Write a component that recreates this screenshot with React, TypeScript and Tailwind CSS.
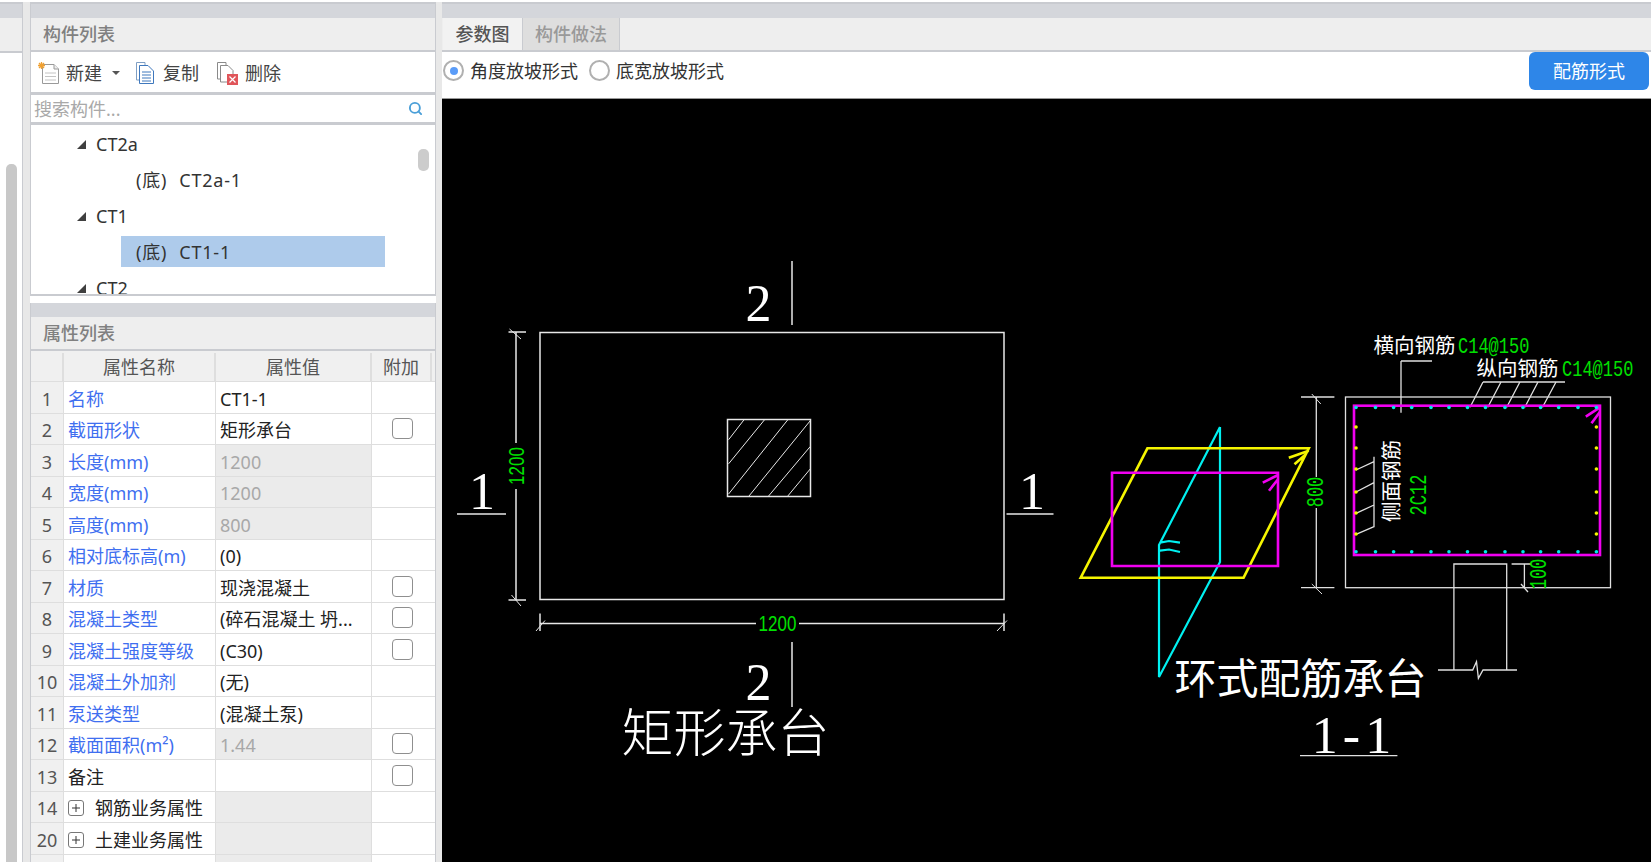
import { Search } from "lucide-react";

const rows = [
  { no: "1", name: "名称", value: "CT1-1" },
  { no: "2", name: "截面形状", value: "矩形承台", check: true },
  { no: "3", name: "长度(mm)", value: "1200", off: true },
  { no: "4", name: "宽度(mm)", value: "1200", off: true },
  { no: "5", name: "高度(mm)", value: "800", off: true },
  { no: "6", name: "相对底标高(m)", value: "(0)" },
  { no: "7", name: "材质", value: "现浇混凝土", check: true },
  { no: "8", name: "混凝土类型", value: "(碎石混凝土 坍...", check: true },
  { no: "9", name: "混凝土强度等级", value: "(C30)", check: true },
  { no: "10", name: "混凝土外加剂", value: "(无)" },
  { no: "11", name: "泵送类型", value: "(混凝土泵)" },
  { no: "12", name: "截面面积(m²)", value: "1.44", off: true, check: true },
  { no: "13", name: "备注", value: "", check: true, black: true },
  { no: "14", name: "钢筋业务属性", value: "", off: true, group: true },
  { no: "20", name: "土建业务属性", value: "", off: true, group: true },
  { no: "", name: "", value: "", off: true, group: true },
];

function Corner() {
  return (
    <svg width="9" height="9" viewBox="0 0 9 9" className="shrink-0">
      <path d="M0 9 L9 0 V9 Z" fill="#3f3f3f" />
    </svg>
  );
}

function NewIcon() {
  return (
    <svg width="24" height="24" viewBox="0 0 24 24" className="shrink-0">
      <path d="M5.5 3.5 H17 L21.5 8 V22.5 H5.5 Z" fill="#fff" stroke="#9a9a9a" />
      <path d="M17 3.5 V8 H21.5" fill="#eee" stroke="#9a9a9a" />
      <path d="M8 12 H19 M8 15.5 H19 M8 19 H19" stroke="#c4c4c4" />
      <path d="M4.5 1 V8 M1 4.5 H8 M2 2 L7 7 M7 2 L2 7" stroke="#f0a030" strokeWidth="1.3" />
    </svg>
  );
}

function CopyIcon() {
  return (
    <svg width="20" height="24" viewBox="0 0 20 24" className="shrink-0">
      <path d="M1.5 1.5 H10 V19 H1.5 Z" fill="#fff" stroke="#7f9fc4" />
      <path d="M4.5 4.5 H13 L18.5 10 V22.5 H4.5 Z" fill="#fff" stroke="#3f78bd" />
      <path d="M7 11 H16 M7 14 H16 M7 17 H16 M7 20 H16" stroke="#3f78bd" />
    </svg>
  );
}

function DeleteIcon() {
  return (
    <svg width="23" height="24" viewBox="0 0 23 24" className="shrink-0">
      <path d="M1.5 1.5 H10 V18 H1.5 Z" fill="#fff" stroke="#8a8a8a" />
      <path d="M4.5 4.5 H12 L17 9.5 V21 H4.5 Z" fill="#fff" stroke="#8a8a8a" />
      <rect x="11" y="13" width="11" height="11" fill="#e0555a" />
      <path d="M13.5 15.5 L19.5 21.5 M19.5 15.5 L13.5 21.5" stroke="#fff" strokeWidth="1.2" />
    </svg>
  );
}

function PlusBox() {
  return (
    <svg width="16" height="16" viewBox="0 0 16 16" className="shrink-0">
      <rect x="0.5" y="0.5" width="15" height="15" rx="2.5" fill="#fff" stroke="#777" />
      <path d="M4 8 H12 M8 4 V12" stroke="#333" />
    </svg>
  );
}

function PropRow({ row }: { row: (typeof rows)[number] }) {
  return (
    <div className="grid h-[31.5px] shrink-0 grid-cols-[33px_152px_156px_60px] border-b border-[#dedede]">
      <div className="flex items-center justify-center border-r border-[#dedede] bg-[#f0f0f0] pt-[3px] text-[#555]">{row.no}</div>
      <div className="flex items-center border-r border-[#dedede] pt-[3px] pl-[4px]">
        {row.group ? (
          <div className="flex items-center gap-[11px] text-[#222]">
            <PlusBox />
            <span>{row.name}</span>
          </div>
        ) : (
          <span className={row.black ? "text-[#222]" : "text-[#3f6ff0]"}>{row.name}</span>
        )}
      </div>
      <div className={`flex items-center border-r border-[#dedede] pt-[3px] pl-[4px] ${row.off ? "bg-[#ebebeb] text-[#a8a8a8]" : "text-[#222]"}`}>
        {row.value}
      </div>
      <div className="flex items-center justify-center">
        {row.check && <div className="h-[21px] w-[21px] rounded-[4px] border border-[#8f8f8f] bg-white" />}
      </div>
    </div>
  );
}

function PanelHeader({ title }: { title: string }) {
  return (
    <>
      <div className="h-[14px] shrink-0 bg-[#d4d6db]" />
      <div className="flex h-[34px] shrink-0 items-center border-b-2 border-[#c9cbd0] bg-[#eeeeee] pl-[12px] font-medium text-[#808080]">
        {title}
      </div>
    </>
  );
}

function Drawing() {
  const topDots = [1356, 1375.5, 1393.6, 1411.7, 1431, 1449, 1467.5, 1485.5, 1505, 1523, 1540.6, 1558.7, 1578, 1596.4];
  const sideDots = [427, 448, 469, 492, 513, 534];
  const serif = "font-['Liberation_Serif',serif] text-[52px] fill-white";
  const cjk = "font-['Noto_Sans_CJK_SC',sans-serif] fill-white";
  const mono = "font-['Liberation_Mono',monospace] text-[17px] fill-[#00e000]";
  const sans = "fill-[#00e000] font-['Liberation_Sans',sans-serif] text-[17px]";

  return (
    <svg viewBox="442 99 1209 763" className="block h-full w-full">
      {/* plan view */}
      <g stroke="#e8e8e8" strokeWidth="1.5" fill="none">
        <rect x="540" y="332.5" width="464" height="267" />
        <rect x="727.5" y="419.5" width="83" height="77" />
        <path d="M792 261V325 M792 642V707 M457 514H506 M1006.5 514H1053.5" />
        <path d="M516 332V443 M516 489V600 M508.5 332H526 M508.5 600H526" />
        <path d="M509.5 329L521 339 M511.5 595L521 606" strokeWidth="1" />
        <path d="M540 623.5H756 M799 623.5H1004 M540 613.5V631 M1004 613.5V631" />
        <path d="M536 631L545 620.5 M997 631L1007 620.5" strokeWidth="1" />
        <path
          d="M728.6 439.7L744 419.8 M728.6 463.8L764.5 419.8 M728.6 494L787.8 419.8 M749 496L810.2 420.8 M768.6 496L810.2 446.6 M787.8 496L810.2 469"
          strokeWidth="1"
        />
      </g>
      <text x="758.5" y="321" textAnchor="middle" className={serif}>2</text>
      <text x="758.5" y="700" textAnchor="middle" className={serif}>2</text>
      <text x="482" y="508.5" textAnchor="middle" className={serif}>1</text>
      <text x="1032" y="508.5" textAnchor="middle" className={serif}>1</text>
      <text transform="translate(777.5 631) scale(1 1.3)" textAnchor="middle" className={sans}>1200</text>
      <text transform="translate(523.5 466) rotate(-90) scale(1 1.35)" textAnchor="middle" className={sans}>1200</text>
      <text x="725.5" y="752" textAnchor="middle" className={`${cjk} font-light text-[52px]`}>矩形承台</text>

      {/* 3d sketch */}
      <g fill="none" strokeWidth="2.2">
        <path
          d="M1220 427V562 L1159 677 V545 L1220 427 M1160 542.7L1169 541L1180 542.7 M1160 550.7L1169 549.5L1180 552"
          stroke="#00f0f0"
        />
        <path
          d="M1147.4 448.3H1308.8L1243.6 577.7H1080.7Z M1308.8 450.7L1288.8 457.7 M1305 455L1294.5 464.3"
          stroke="#f5f500"
          strokeWidth="2.6"
        />
        <path d="M1112 472.7H1278V566H1112Z M1278 475L1262.8 482.7 M1278 479.3L1269 490.7" stroke="#f000f0" strokeWidth="2.6" />
      </g>

      {/* section 1-1 */}
      <g stroke="#e0e0e0" strokeWidth="1.3" fill="none">
        <rect x="1345.5" y="397" width="265" height="190.7" />
        <path d="M1316.3 397V477 M1316.3 508V587.7 M1301 397H1334.4 M1301 587.7H1334.4" />
        <path d="M1311.8 394L1320.8 404 M1311.8 584L1322 594" strokeWidth="1" />
        <path d="M1401 361H1432 M1401 361V412.7 M1483 382H1565" />
        <path d="M1483 382L1470 407.3 M1501 382L1487.8 407.3 M1519.9 382L1506.7 407.3 M1538 382L1524.8 407.3 M1556 382L1542.5 407.3" />
        <path d="M1374 456.7V527.3 M1374 461.7L1356 470 M1374 482.7L1356 492 M1374 505L1356 513.3 M1374 526.7L1356 534.3" />
        <path d="M1453.9 670V564H1506.7V670 M1438 670H1472.7L1476.5 661.7L1478.4 678.3L1483 670H1517" />
        <path d="M1524.4 564V587.7 M1511.6 564H1531 M1521 584L1528 592" />
        <path d="M1300 755.7H1397.4" />
      </g>
      <rect x="1354" y="405.7" width="246" height="149.3" fill="none" stroke="#f000f0" strokeWidth="2.6" />
      <path d="M1600 407.3L1585.8 416.7 M1600 411.7L1591.5 423.3" stroke="#f000f0" strokeWidth="2.6" />
      {topDots.map((x) => (
        <g key={x} fill="#00e8e8">
          <circle cx={x} cy="407.5" r="1.8" />
          <circle cx={x} cy="551.7" r="1.8" />
        </g>
      ))}
      {sideDots.map((y) => (
        <g key={y} fill="#f5f500">
          <circle cx="1356" cy={y} r="1.8" />
          <circle cx="1596.4" cy={y} r="1.8" />
        </g>
      ))}
      <text x="1373.5" y="353" className={`${cjk} text-[20.5px]`}>横向钢筋</text>
      <text x="1476.5" y="375.5" className={`${cjk} text-[20.5px]`}>纵向钢筋</text>
      <text transform="translate(1399 481) rotate(-90)" textAnchor="middle" className={`${cjk} text-[20.5px]`}>侧面钢筋</text>
      <text transform="translate(1458 353) scale(1 1.35)" className={mono}>C14@150</text>
      <text transform="translate(1562 376) scale(1 1.35)" className={mono}>C14@150</text>
      <text transform="translate(1323 492) rotate(-90) scale(1 1.4)" textAnchor="middle" className={mono}>800</text>
      <text transform="translate(1426 495) rotate(-90) scale(1 1.4)" textAnchor="middle" className={mono}>2C12</text>
      <text transform="translate(1546 574) rotate(-90) scale(1 1.4)" textAnchor="middle" className={mono}>100</text>
      <text x="1300.5" y="694" textAnchor="middle" className={`${cjk} text-[42px]`}>环式配筋承台</text>
      <text x="1354" y="752.7" textAnchor="middle" className={`${serif} tracking-[5px]`}>1-1</text>
    </svg>
  );
}

export default function App() {
  return (
    <div className="flex h-[862px] w-[1651px] overflow-hidden bg-white pt-[2px] font-['Noto_Sans','Noto_Sans_CJK_SC',sans-serif] text-[18px] leading-none">
      {/* far left stub */}
      <div className="flex w-[23px] shrink-0 flex-col border-t-2 border-r border-[#c9cbd0]">
        <div className="h-[14px] shrink-0 bg-[#d4d6db]" />
        <div className="h-[35px] shrink-0 border-b-2 border-[#c9cbd0] bg-[#eeeeee]" />
        <div className="flex-1 pt-[111px] pl-[6px]">
          <div className="h-[800px] w-[11px] rounded-t-[5px] bg-[#c8c8c8]" />
        </div>
      </div>
      <div className="w-[7px] shrink-0 bg-[#e8e8e8]" />

      {/* left panels */}
      <div className="flex w-[406px] shrink-0 flex-col border-t-2 border-[#c9cbd0]">
        <div className="flex h-[292px] shrink-0 flex-col border-x border-b-2 border-[#c9cbd0]">
          <PanelHeader title="构件列表" />
          <div className="flex h-[40px] shrink-0 items-center pt-[2px] pl-[6px] text-[#444]">
            <NewIcon />
            <span className="ml-[5px]">新建</span>
            <span className="ml-[10px] h-0 w-0 border-x-[4px] border-t-[4px] border-x-transparent border-t-[#555]" />
            <span className="ml-[15px]"><CopyIcon /></span>
            <span className="ml-[8px]">复制</span>
            <span className="ml-[17px]"><DeleteIcon /></span>
            <span className="ml-[6px]">删除</span>
          </div>
          <div className="flex h-[33px] shrink-0 items-center justify-between border-y-[3px] border-[#c9cbd0] pr-[12px] pl-[3px] text-[#a9a9a9]">
            <span>搜索构件...</span>
            <Search size={15} strokeWidth={3} className="text-[#4a9fd8]" />
          </div>
          <div className="relative flex-1 overflow-hidden pt-[1px] text-[#333]">
            <div className="flex h-[36px] items-center gap-[10px] pl-[46px]"><Corner />CT2a</div>
            <div className="flex h-[36px] items-center pl-[105px] tracking-[0.8px]"><span className="mr-[12px]">(底)</span>CT2a-1</div>
            <div className="flex h-[36px] items-center gap-[10px] pl-[46px]"><Corner />CT1</div>
            <div className="mt-[2px] ml-[90px] flex h-[31px] w-[264px] items-center bg-[#aecbeb] pl-[15px] tracking-[0.8px]"><span className="mr-[12px]">(底)</span>CT1-1</div>
            <div className="mt-[3px] flex h-[36px] items-center gap-[10px] pl-[46px]"><Corner />CT2</div>
            <div className="absolute top-[24px] right-[6px] h-[22px] w-[11px] rounded-[5px] bg-[#cccccc]" />
          </div>
        </div>
        <div className="h-[7px] shrink-0" />
        <div className="flex min-h-0 flex-1 flex-col overflow-hidden border-x border-[#c9cbd0]">
          <PanelHeader title="属性列表" />
          <div className="grid h-[31px] shrink-0 grid-cols-[33px_152px_156px_60px] border-b border-[#dedede] bg-[#f0f0f0] pt-[2px] text-[#555]">
            <div className="border-r-2 border-[#dedede]" />
            <div className="flex items-center justify-center border-r-2 border-[#dedede]">属性名称</div>
            <div className="flex items-center justify-center border-r-2 border-[#dedede]">属性值</div>
            <div className="flex items-center justify-center border-r-2 border-[#dedede]">附加</div>
          </div>
          {rows.map((row, i) => (
            <PropRow key={i} row={row} />
          ))}
        </div>
      </div>
      <div className="w-[6px] shrink-0 bg-[#e8e8e8]" />

      {/* right side */}
      <div className="flex min-w-0 flex-1 flex-col border-t-2 border-[#c9cbd0]">
        <div className="h-[14px] shrink-0 bg-[#d4d6db]" />
        <div className="flex h-[34px] shrink-0 border-b-2 border-[#c9cbd0] bg-[#eeeeee] pl-[1px] font-medium">
          <div className="flex w-[80px] items-center justify-center border-r border-[#c9cbd0] bg-[#f2f2f2] text-[#555]">参数图</div>
          <div className="flex w-[97px] items-center justify-center border-r border-[#c9cbd0] bg-[#dedede] text-[#999]">构件做法</div>
        </div>
        <div className="flex h-[47px] shrink-0 items-start border-b border-[#999] pr-[2px] text-[#333]">
          <div className="mt-[8px] flex items-center pl-[1px]">
            <span className="flex h-[21px] w-[21px] items-center justify-center rounded-full border-2 border-[#b0b0b0]">
              <span className="h-[8px] w-[8px] rounded-full bg-[#5a9cf8]" />
            </span>
            <span className="ml-[6px]">角度放坡形式</span>
            <span className="ml-[11px] h-[21px] w-[21px] rounded-full border-2 border-[#b0b0b0]" />
            <span className="ml-[6px]">底宽放坡形式</span>
          </div>
          <button className="ml-auto flex h-[38px] w-[120px] items-center justify-center rounded-[6px] bg-[#2e86e8] text-white">
            配筋形式
          </button>
        </div>
        <div className="min-h-0 flex-1 bg-black">
          <Drawing />
        </div>
      </div>
    </div>
  );
}
